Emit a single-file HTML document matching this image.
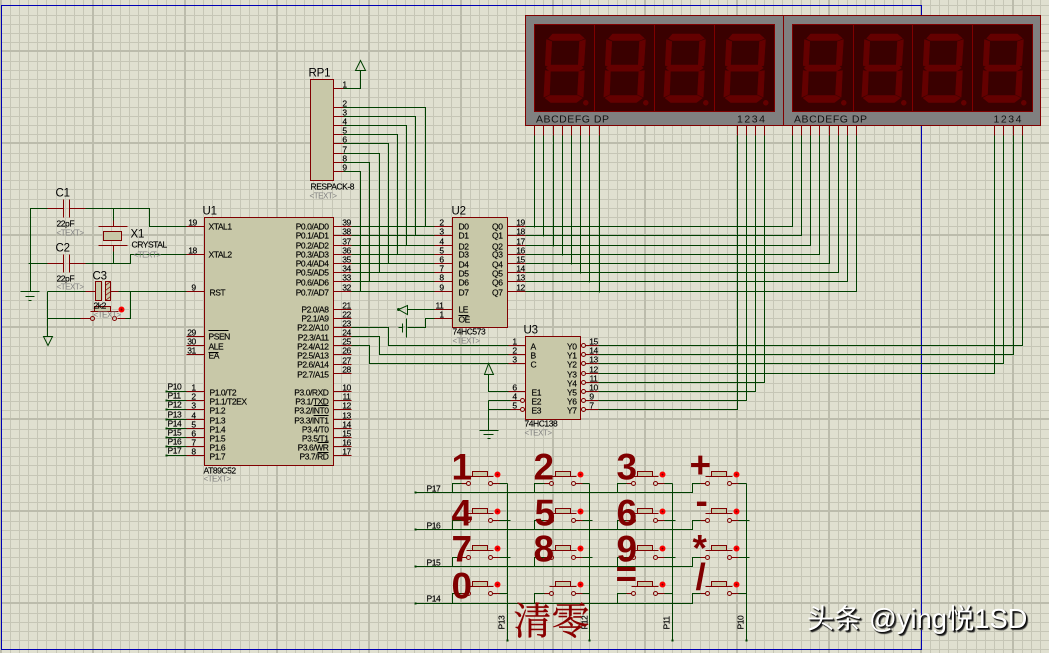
<!DOCTYPE html>
<html><head><meta charset="utf-8"><style>
html,body{margin:0;padding:0;background:#e0e0d0}
#w{position:relative;width:1049px;height:653px;overflow:hidden}
svg{position:absolute;left:0;top:0}
text{font-family:"Liberation Sans","Noto Sans CJK SC",sans-serif;font-size:8.5px;fill:#000;stroke:#000;stroke-width:.15px;letter-spacing:-.45px}
.n{text-anchor:middle}.r{text-anchor:end}
.g{fill:#7f7f7f;stroke:none;font-size:8px}
.l{font-size:11.5px;letter-spacing:-.2px;stroke:none}
.big{font-size:37px;font-weight:bold;fill:#800000;stroke:none;letter-spacing:0}
.d{font-size:10.5px;letter-spacing:0;fill:#111;stroke:none}
.w{fill:none;stroke:#004000;stroke-width:1;shape-rendering:crispEdges}
.p{fill:none;stroke:#800000;stroke-width:1;shape-rendering:crispEdges}
.k{fill:none;stroke:#000;stroke-width:1;shape-rendering:crispEdges}
.b{fill:#c8c8a8;stroke:#800000;stroke-width:1;shape-rendering:crispEdges}
#mark{position:absolute;left:807px;top:603px;font:27.3px "Liberation Sans","Noto Sans CJK SC",sans-serif;color:#fff;text-shadow:1px 1px 1px #000,2px 2px 1px #333;white-space:nowrap;line-height:32px}
</style></head><body><div id="w">
<svg width="1049" height="653" viewBox="0 0 1049 653" xmlns="http://www.w3.org/2000/svg">
<defs>
<pattern id="gr" patternUnits="userSpaceOnUse" x="0" y="50" width="92" height="92">
<path fill="#c6c6b6" d="M10 0h1v92h-1zM19 0h1v92h-1zM28 0h1v92h-1zM37 0h1v92h-1zM46 0h1v92h-1zM56 0h1v92h-1zM65 0h1v92h-1zM74 0h1v92h-1zM83 0h1v92h-1zM0 11h92v1H0zM0 20h92v1H0zM0 29h92v1H0zM0 38h92v1H0zM0 47h92v1H0zM0 57h92v1H0zM0 66h92v1H0zM0 75h92v1H0zM0 84h92v1H0z"/>
<path fill="#bcbcac" d="M0 0h2v92H0zM0 0h92v2H0z"/>
</pattern>
<g id="d" fill="#640000" stroke="#640000" stroke-width=".5">
<path d="M18 9.5H45L50 14 45 16H18L14 14Z"/>
<path d="M12 15 17.3 17 16 41 14 42 10.7 41Z"/>
<path d="M51 15 49.3 41 46 42 43.7 41 45 17Z"/>
<path d="M11.5 43.5 16 40.5H44.5L49 43.5 44 46.7H15Z"/>
<path d="M10.7 46 16 47 15 70 9.3 72.7Z"/>
<path d="M50 46 48.7 72.7 43 70 44.3 47Z"/>
<path d="M10.5 73.5 15 71H43L48 73.5 42 78H16Z"/>
<circle cx="51.3" cy="78.3" r="2.5"/>
</g>
<g id="sw">
<path class="p" d="M-7 0H-2M24 0H31M-2 -7H25"/>
<rect class="b" x="4" y="-12" width="15" height="5"/>
<circle cx="0" cy="0" r="2" fill="none" stroke="#800000"/>
<circle cx="22" cy="0" r="2" fill="none" stroke="#800000"/>
<circle cx="29" cy="-9" r="3" fill="#f00"/>
<circle cx="29" cy="-9" r="1" fill="#800000"/>
</g>
</defs>
<rect width="1049" height="653" fill="#e0e0d0"/>
<rect width="1049" height="653" fill="url(#gr)"/>
<g transform="translate(.5 .5)">
<path d="M921 5H1V649H921Z" fill="none" stroke="#0000b4" shape-rendering="crispEdges"/>

<!-- displays -->
<rect x="525" y="15" width="258" height="110" fill="#808080" stroke="#800000" shape-rendering="crispEdges"/>
<rect x="783" y="15" width="257" height="110" fill="#808080" stroke="#800000" shape-rendering="crispEdges"/>
<rect x="534" y="24" width="240" height="87" fill="#3a0000" stroke="#800000" shape-rendering="crispEdges"/>
<rect x="792" y="24" width="240" height="87" fill="#3a0000" stroke="#800000" shape-rendering="crispEdges"/>
<path class="p" d="M594 24V111M654 24V111M714 24V111M853 24V111M912 24V111M972 24V111"/>
<use href="#d" x="534" y="24"/><use href="#d" x="594" y="24"/><use href="#d" x="654" y="24"/><use href="#d" x="714" y="24"/>
<use href="#d" x="792" y="24"/><use href="#d" x="852" y="24"/><use href="#d" x="912" y="24"/><use href="#d" x="972" y="24"/>
<text class="d" x="535.5" y="122" textLength="73" lengthAdjust="spacing">ABCDEFG DP</text>
<text class="d" x="736.5" y="122" textLength="28" lengthAdjust="spacing">1234</text>
<text class="d" x="793.5" y="122" textLength="73" lengthAdjust="spacing">ABCDEFG DP</text>
<text class="d" x="993" y="122" textLength="28" lengthAdjust="spacing">1234</text>
<path class="p" d="M534 125V135M543 125V135M553 125V135M562 125V135M571 125V135M580 125V135M589 125V135M599 125V135M737 125V135M746 125V135M755 125V135M764 125V135M792 125V135M801 125V135M810 125V135M819 125V135M829 125V135M838 125V135M847 125V135M856 125V135M994 125V135M1003 125V135M1013 125V135M1022 125V135"/>

<!-- wires -->
<path class="w" d="M343 88H360V70M343 107H425V226M343 116H415V235M343 125H406V245M343 134H397V254M343 143H388V263M343 153H379V272M343 162H369V281M343 171H360V291
M351 226H434M351 235H434M351 245H434M351 254H434M351 263H434M351 272H434M351 281H434M351 291H434
M525 226H792V135M525 235H801V135M525 245H810V135M525 254H819V135M525 263H829V135M525 272H838V135M525 281H847V135M525 291H856V135
M534 135V227M543 135V236M553 135V246M562 135V255M571 135V264M580 135V273M589 135V282M599 135V292
M737 135V409H598M746 135V400H598M755 135V391H598M764 135V382H598
M994 135V373H598M1003 135V363H598M1013 135V354H598M1022 135V345H598
M351 327H388V345H508M351 336H379V354H508M351 345H369V363H508
M407 309H434M434 318H425V327H407M406 318V337M402 323V332M398 327H402
M488 374V391H508M488 400H510M488 400V430M488 409H510M479 430H498M483 434H493M487 438H490
M47 208H30V291M47 263H28M85 208H149V226H186M113 208V220M113 251V263M85 263H130V254H186
M20 291H39M25 296H34M28 300H31
M47 291H85M118 291H186M130 291V318H125M47 291V336M47 318H80
M166 391H186M166 400H186M166 409H186M166 419H186M166 428H186M166 437H186M166 446H186M166 455H186
M415 492H692V483H700M415 529H692V520H700M415 566H692V557H700M415 603H692V593H700
M452 492V483H461M534 492V483H544M617 492V483H626
M452 529V520H461M534 529V520H544M617 529V520H626
M452 566V557H461M534 566V557H544M617 566V557H626
M452 603V593H461M534 603V593H544M617 603V593H626
M507 483V640M589 483V640M672 483V640M746 483V640
M499 483H507M499 520H510M499 557H510M499 593H507
M582 483H589M582 520H592M582 557H592M582 593H589
M664 483H672M664 520H675M664 557H675M664 593H672
M738 483H746M738 520H749M738 557H749M738 593H746"/>
<path fill="none" stroke="#004000" d="M398 309 407 305V314ZM43 336H52L47.500 345ZM488 363 484 374H493ZM360 60 355 70H365Z"/>
<circle cx="398" cy="309" r="1.500" fill="#004000"/>
<path fill="#004000" d="M414 491h2v2h-2zM414 528h2v2h-2zM414 565h2v2h-2zM414 602h2v2h-2zM506 639h2v2h-2zM588 639h2v2h-2zM671 639h2v2h-2zM745 639h2v2h-2zM165 390h2v2h-2zM165 399h2v2h-2zM165 408h2v2h-2zM165 418h2v2h-2zM165 427h2v2h-2zM165 436h2v2h-2zM165 445h2v2h-2zM165 454h2v2h-2z"/>

<!-- pins -->
<path class="p" d="M333 88H343M333 107H343M333 116H343M333 125H343M333 134H343M333 143H343M333 153H343M333 162H343M333 171H343
M333 226H351M333 235H351M333 245H351M333 254H351M333 263H351M333 272H351M333 281H351M333 291H351
M333 309H351M333 318H351M333 327H351M333 336H351M333 345H351M333 354H351M333 364H351M333 373H351
M333 391H351M333 400H351M333 409H351M333 419H351M333 428H351M333 437H351M333 446H351M333 455H351
M186 226H204M186 254H204M186 291H204M186 336H204M186 345H204M186 354H204
M186 391H204M186 400H204M186 409H204M186 419H204M186 428H204M186 437H204M186 446H204M186 455H204
M434 226H452M434 235H452M434 245H452M434 254H452M434 263H452M434 272H452M434 281H452M434 291H452M434 309H452M434 318H452
M507 226H525M507 235H525M507 245H525M507 254H525M507 263H525M507 272H525M507 281H525M507 291H525
M508 345H525M508 354H525M508 363H525M508 391H525M510 400H520M510 409H520
M585 345H598M585 354H598M585 363H598M585 373H598M585 382H598M585 391H598M585 400H598M585 409H598
M47 208H63M69 208H85M63 199V217M69 199V217M47 263H63M69 263H85M63 254V272M69 254V272
M113 220V226M98 226H127M98 245H127M113 245V251M85 291H95M110 291H118M80 318H90M117 318H125M90 311H118"/>
<rect class="b" x="310" y="79" width="23" height="101"/>
<rect class="b" x="204" y="217" width="129" height="248"/>
<rect class="b" x="452" y="217" width="55" height="110"/>
<rect class="b" x="525" y="336" width="55" height="83"/>
<rect class="b" x="103" y="231" width="18" height="9"/>
<rect class="b" x="95" y="281" width="6" height="19"/>
<rect class="b" x="105" y="281" width="5" height="19"/>
<path fill="none" stroke="#800000" stroke-width=".7" d="M105 285l5-4M105 290l5-4M105 295l5-4M105 300l5-4"/>
<rect class="b" x="94" y="306" width="16" height="5"/>
<circle cx="92" cy="318" r="2" fill="none" stroke="#800000"/><circle cx="114" cy="318" r="2" fill="none" stroke="#800000"/>
<circle cx="121" cy="309" r="3" fill="#f00"/><circle cx="121" cy="309" r="1" fill="#800000"/>
<g fill="none" stroke="#800000"><circle cx="583" cy="345" r="2"/><circle cx="583" cy="354" r="2"/><circle cx="583" cy="363" r="2"/><circle cx="583" cy="373" r="2"/><circle cx="583" cy="382" r="2"/><circle cx="583" cy="391" r="2"/><circle cx="583" cy="400" r="2"/><circle cx="583" cy="409" r="2"/><circle cx="522" cy="400" r="2"/><circle cx="522" cy="409" r="2"/></g>

<!-- overbars -->
<path class="k" d="M208 330H228M208 352H218M313 405H328M313 415H328M317 442H328M317 452H328M458 315H468"/>

<!-- switches -->
<use href="#sw" x="468" y="483"/><use href="#sw" x="551" y="483"/><use href="#sw" x="633" y="483"/><use href="#sw" x="707" y="483"/>
<use href="#sw" x="468" y="520"/><use href="#sw" x="551" y="520"/><use href="#sw" x="633" y="520"/><use href="#sw" x="707" y="520"/>
<use href="#sw" x="468" y="557"/><use href="#sw" x="551" y="557"/><use href="#sw" x="633" y="557"/><use href="#sw" x="707" y="557"/>
<use href="#sw" x="468" y="593"/><use href="#sw" x="551" y="593"/><use href="#sw" x="633" y="593"/><use href="#sw" x="707" y="593"/>

<!-- labels -->
<text class="l" x="308" y="76">RP1</text>
<text x="310" y="189">RESPACK-8</text><text class="g" x="309" y="198">&lt;TEXT&gt;</text>
<text class="l" x="55" y="196">C1</text><text x="56" y="226">22pF</text><text class="g" x="56" y="235">&lt;TEXT&gt;</text>
<text class="l" x="55" y="251">C2</text><text x="56" y="281">22pF</text><text class="g" x="56" y="289">&lt;TEXT&gt;</text>
<text class="l" x="92" y="279">C3</text><text x="93" y="308">2k2</text><text class="g" x="93" y="317">&lt;TEXT&gt;</text>
<text class="l" x="130" y="237">X1</text><text x="131" y="247">CRYSTAL</text><text class="g" x="133" y="257">&lt;TEXT&gt;</text>
<text class="l" x="202" y="214">U1</text><text x="203" y="473">AT89C52</text><text class="g" x="203" y="481">&lt;TEXT&gt;</text>
<text class="l" x="451" y="214">U2</text><text x="452" y="334">74HC573</text><text class="g" x="452" y="343">&lt;TEXT&gt;</text>
<text class="l" x="523" y="333">U3</text><text x="524" y="426">74HC138</text><text class="g" x="524" y="435">&lt;TEXT&gt;</text>

<!-- U1 left names -->
<text x="208" y="229">XTAL1</text><text x="208" y="257">XTAL2</text><text x="209" y="295">RST</text>
<text x="208" y="339">PSEN</text><text x="208" y="349">ALE</text><text x="208" y="358">EA</text>
<text x="209" y="395">P1.0/T2</text><text x="209" y="404">P1.1/T2EX</text><text x="209" y="413">P1.2</text><text x="209" y="423">P1.3</text><text x="209" y="432">P1.4</text><text x="209" y="441">P1.5</text><text x="209" y="450">P1.6</text><text x="209" y="459">P1.7</text>
<!-- U1 right names -->
<g class="r" text-anchor="end">
<text class="r" x="328" y="229">P0.0/AD0</text><text class="r" x="328" y="238">P0.1/AD1</text><text class="r" x="328" y="248">P0.2/AD2</text><text class="r" x="328" y="257">P0.3/AD3</text><text class="r" x="328" y="266">P0.4/AD4</text><text class="r" x="328" y="275">P0.5/AD5</text><text class="r" x="328" y="285">P0.6/AD6</text><text class="r" x="328" y="295">P0.7/AD7</text>
<text class="r" x="328" y="312">P2.0/A8</text><text class="r" x="328" y="321">P2.1/A9</text><text class="r" x="328" y="330">P2.2/A10</text><text class="r" x="328" y="340">P2.3/A11</text><text class="r" x="328" y="349">P2.4/A12</text><text class="r" x="328" y="358">P2.5/A13</text><text class="r" x="328" y="367">P2.6/A14</text><text class="r" x="328" y="377">P2.7/A15</text>
<text class="r" x="328" y="395">P3.0/RXD</text><text class="r" x="328" y="404">P3.1/TXD</text><text class="r" x="328" y="413">P3.2/INT0</text><text class="r" x="328" y="423">P3.3/INT1</text><text class="r" x="328" y="432">P3.4/T0</text><text class="r" x="328" y="441">P3.5/T1</text><text class="r" x="328" y="450">P3.6/WR</text><text class="r" x="328" y="459">P3.7/RD</text>
</g>
<!-- U1 pin numbers -->
<text class="n" x="192" y="225">19</text><text class="n" x="192" y="253">18</text><text class="n" x="193" y="290">9</text><text class="n" x="191" y="335">29</text><text class="n" x="191" y="344">30</text><text class="n" x="191" y="353">31</text>
<text class="n" x="193" y="390">1</text><text class="n" x="193" y="399">2</text><text class="n" x="193" y="408">3</text><text class="n" x="193" y="418">4</text><text class="n" x="193" y="427">5</text><text class="n" x="193" y="436">6</text><text class="n" x="193" y="445">7</text><text class="n" x="193" y="454">8</text>
<text class="n" x="346" y="225">39</text><text class="n" x="346" y="234">38</text><text class="n" x="346" y="244">37</text><text class="n" x="346" y="253">36</text><text class="n" x="346" y="262">35</text><text class="n" x="346" y="271">34</text><text class="n" x="346" y="280">33</text><text class="n" x="346" y="290">32</text>
<text class="n" x="346" y="308">21</text><text class="n" x="346" y="317">22</text><text class="n" x="346" y="326">23</text><text class="n" x="346" y="335">24</text><text class="n" x="346" y="344">25</text><text class="n" x="346" y="353">26</text><text class="n" x="346" y="363">27</text><text class="n" x="346" y="372">28</text>
<text class="n" x="346" y="390">10</text><text class="n" x="346" y="399">11</text><text class="n" x="346" y="408">12</text><text class="n" x="346" y="418">13</text><text class="n" x="346" y="427">14</text><text class="n" x="346" y="436">15</text><text class="n" x="346" y="445">16</text><text class="n" x="346" y="454">17</text>
<!-- P1 labels -->
<text x="167" y="389">P10</text><text x="167" y="398">P11</text><text x="167" y="407">P12</text><text x="167" y="417">P13</text><text x="167" y="426">P14</text><text x="167" y="435">P15</text><text x="167" y="444">P16</text><text x="167" y="453">P17</text>
<!-- RP1 numbers -->
<text class="n" x="344" y="87">1</text><text class="n" x="344" y="106">2</text><text class="n" x="344" y="115">3</text><text class="n" x="344" y="124">4</text><text class="n" x="344" y="133">5</text><text class="n" x="344" y="142">6</text><text class="n" x="344" y="152">7</text><text class="n" x="344" y="161">8</text><text class="n" x="344" y="170">9</text>
<!-- U2 -->
<text x="458" y="229">D0</text><text x="458" y="238">D1</text><text x="458" y="249">D2</text><text x="458" y="257">D3</text><text x="458" y="267">D4</text><text x="458" y="276">D5</text><text x="458" y="285">D6</text><text x="458" y="295">D7</text><text x="458" y="312">LE</text><text x="458" y="322">OE</text>
<text class="r" x="502" y="229">Q0</text><text class="r" x="502" y="238">Q1</text><text class="r" x="502" y="249">Q2</text><text class="r" x="502" y="257">Q3</text><text class="r" x="502" y="267">Q4</text><text class="r" x="502" y="276">Q5</text><text class="r" x="502" y="285">Q6</text><text class="r" x="502" y="295">Q7</text>
<text class="n" x="441" y="225">2</text><text class="n" x="441" y="234">3</text><text class="n" x="441" y="244">4</text><text class="n" x="441" y="253">5</text><text class="n" x="441" y="262">6</text><text class="n" x="441" y="271">7</text><text class="n" x="441" y="280">8</text><text class="n" x="441" y="290">9</text><text class="n" x="439" y="308">11</text><text class="n" x="441" y="317">1</text>
<text class="n" x="520" y="225">19</text><text class="n" x="520" y="234">18</text><text class="n" x="520" y="244">17</text><text class="n" x="520" y="253">16</text><text class="n" x="520" y="262">15</text><text class="n" x="520" y="271">14</text><text class="n" x="520" y="280">13</text><text class="n" x="520" y="290">12</text>
<!-- U3 -->
<text x="530" y="349">A</text><text x="530" y="358">B</text><text x="530" y="367">C</text><text x="531" y="395">E1</text><text x="531" y="404">E2</text><text x="531" y="413">E3</text>
<text class="r" x="576" y="349">Y0</text><text class="r" x="576" y="358">Y1</text><text class="r" x="576" y="367">Y2</text><text class="r" x="576" y="377">Y3</text><text class="r" x="576" y="386">Y4</text><text class="r" x="576" y="395">Y5</text><text class="r" x="576" y="404">Y6</text><text class="r" x="576" y="413">Y7</text>
<text class="n" x="514" y="344">1</text><text class="n" x="514" y="353">2</text><text class="n" x="514" y="362">3</text><text class="n" x="514" y="390">6</text><text class="n" x="514" y="399">4</text><text class="n" x="514" y="408">5</text>
<text class="n" x="593" y="344">15</text><text class="n" x="593" y="353">14</text><text class="n" x="593" y="362">13</text><text class="n" x="593" y="372">12</text><text class="n" x="593" y="381">11</text><text class="n" x="593" y="390">10</text><text class="n" x="591" y="399">9</text><text class="n" x="591" y="408">7</text>
<!-- keypad labels -->
<text x="426" y="491">P17</text><text x="426" y="528">P16</text><text x="426" y="565">P15</text><text x="426" y="601">P14</text>
<text transform="rotate(-90 504 629)" x="504" y="629">P13</text>
<text transform="rotate(-90 587 629)" x="587" y="629">P12</text>
<text transform="rotate(-90 669 629)" x="669" y="629">P11</text>
<text transform="rotate(-90 743 629)" x="743" y="629">P10</text>
<!-- keypad big characters -->
<text class="big" x="451" y="479">1</text><text class="big" x="533" y="479">2</text><text class="big" x="616" y="479">3</text><text class="big" x="689" y="477">+</text>
<text class="big" x="451" y="525">4</text><text class="big" x="534" y="525">5</text><text class="big" x="616" y="525">6</text><text class="big" x="695" y="513">-</text>
<text class="big" x="451" y="561">7</text><text class="big" x="533" y="561">8</text><text class="big" x="616" y="561">9</text><text class="big" x="692" y="560">*</text>
<text class="big" x="451" y="598">0</text><text class="big" x="615" y="586">=</text><text class="big" x="695" y="589">/</text>
<text x="513" y="634" style="font-family:'Noto Serif CJK SC',serif;font-size:38px;fill:#8a0000;stroke:#8a0000;stroke-width:.4px;letter-spacing:0">清零</text>
</g>
</svg>
<div id="mark">头条 @ying悦1SD</div>
</div></body></html>
